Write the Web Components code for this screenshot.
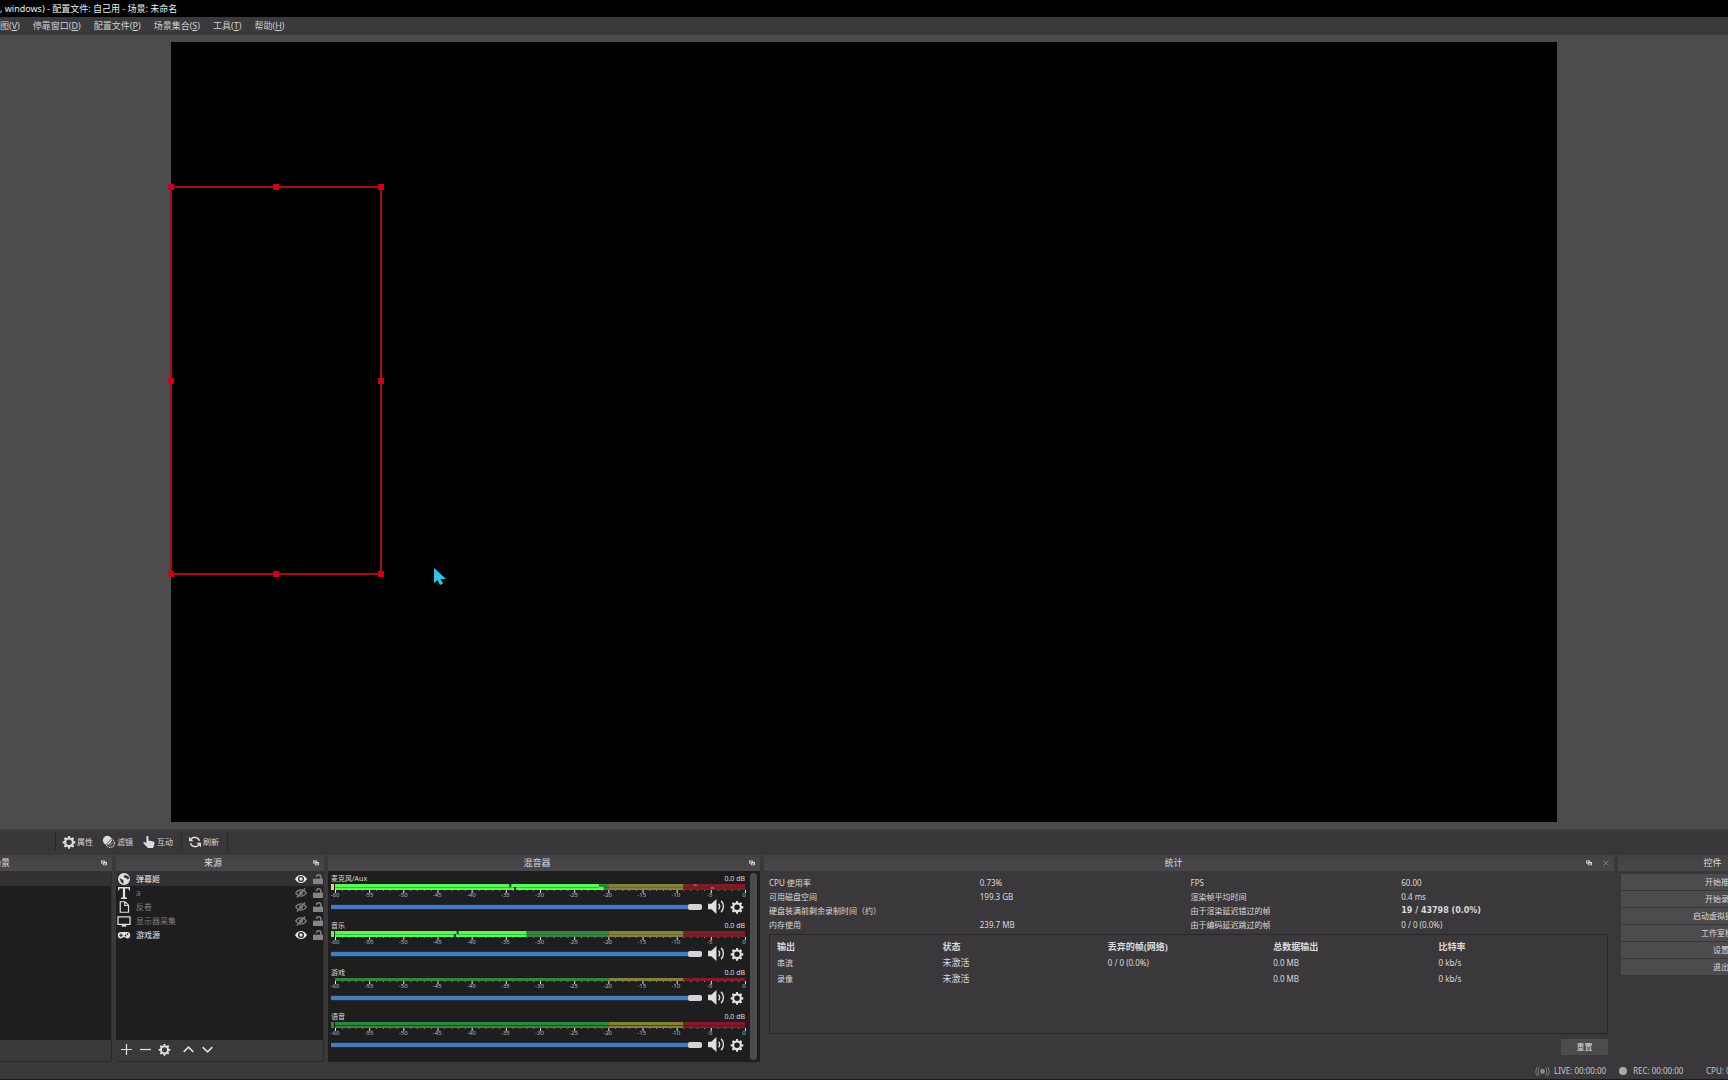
<!DOCTYPE html>
<html lang="zh-CN">
<head>
<meta charset="utf-8">
<title>OBS</title>
<style>
html,body{margin:0;height:100%;background:#3a383b}
body{overflow:hidden;font:8px/14px "Noto Sans","Noto Sans CJK SC",sans-serif;color:#dcdadc}
</style>
</head>
<body>
<obs-window></obs-window>
<script>
const define=(name,html,setup)=>customElements.define(name,class extends HTMLElement{
  connectedCallback(){
    if(this.shadowRoot)return;
    const root=this.attachShadow({mode:'open'});
    root.innerHTML='<style>*{box-sizing:border-box}button,input{font:inherit;color:inherit;margin:0}</style>'+(typeof html==='function'?html(this):html);
    if(setup)setup(this,root);
  }
});

const gear='<path fill-rule="evenodd" d="M6.8 0h2.4l.5 2.2 1.5.6 2-1.2 1.7 1.7-1.2 2 .6 1.5 2.2.5v2.4l-2.2.5-.6 1.5 1.2 2-1.7 1.7-2-1.2-1.5.6-.5 2.2H6.800l-.5-2.200-1.500-.6-2 1.200-1.700-1.700 1.200-2-.6-1.500L-.5 9.700V7.300l2.200-.5.6-1.500-1.200-2 1.700-1.700 2 1.200 1.500-.6zM8 4.600A3.600 3.600 0 1 0 8 12a3.600 3.600 0 0 0 0-7.400z"/>';
const icons={
  gear,
  filter:'<circle cx="5.800" cy="5.800" r="6"/><circle cx="9.500" cy="9.500" r="5.800" fill="none" stroke="currentColor" stroke-width="1.400" stroke-dasharray="1.800 1"/><path d="M4 11.500 11.500 4M6.500 13l7-7" stroke="#3a383b" stroke-width="1"/><path d="m8.500 13.500 5-5" stroke="currentColor" stroke-width="1"/>',
  hand:'<path d="M4.500 1.200C4.500-.2 7.300-.2 7.300 1.200V6l6.500 1.300c1.300.3 1.700 1 1.500 2.200l-.9 4.500-1.200 2H6.500L.5 9.800C0 8.300 1.600 7.600 2.700 8.400l1.800 1.400z"/>',
  refresh:'<g fill="none" stroke="currentColor" stroke-width="2"><path d="M2.500 4.500A6.500 6.500 0 0 1 14 6.500M13.500 11.500A6.500 6.500 0 0 1 2 9.500"/></g><path d="M0 1v6h6zM16 15V9h-6z"/>',
  globe:'<path fill-rule="evenodd" d="M8 0a8 8 0 1 0 0 16A8 8 0 0 0 8 0zm1.500 2.500 4.500 2 .8 3-2.300 1-1.500-1.800-2.500-.5L7.500 4zM2 7l4 1.500 1.500 2.200L7 14.500 4 12z"/>',
  text:'<path d="M0 0h16v4.500h-1.300L14 2H9.500v11.500l2.500.8V16H4v-1.700l2.500-.8V2H2l-.7 2.500H0z"/>',
  file:'<path d="M3 1h6.500L14 5.500V15H3zM9 1v5h5" fill="none" stroke="currentColor" stroke-width="1.600"/>',
  display:'<path d="M0 2.500h16v10H0z" fill="none" stroke="currentColor" stroke-width="1.700"/><path d="M5 12.500h6v3H5z"/>',
  pad:'<path fill-rule="evenodd" d="M4 4h8a4 4 0 0 1 0 8.500c-1.500 0-2.200-1.500-3-1.500H7c-.8 0-1.500 1.500-3 1.500A4 4 0 0 1 4 4zM3.300 6v1.500H1.800V9h1.500v1.500h1.500V9h1.500V7.500H4.800V6zM10 7.800a1 1 0 1 0 .1 0zM12.700 5.700a1 1 0 1 0 .1 0z"/>',
  eye:'<path fill-rule="evenodd" d="M0 8c4-7 12-7 16 0-4 7-12 7-16 0zm8-4a4 4 0 1 0 0 8 4 4 0 0 0 0-8z"/><circle cx="8" cy="8" r="2.200"/>',
  hidden:'<path d="M1 8c3.500-5.600 10.500-5.600 14 0-3.500 5.600-10.500 5.600-14 0z" fill="none" stroke="currentColor" stroke-width="1.800"/><circle cx="8" cy="8" r="2.500"/><path d="M2.500 14 13.500 2" stroke="currentColor" stroke-width="1.800"/>',
  lock:'<path d="M0 7.500h16V16H0z"/><path d="M5.500 4.500C6 .2 12.500.2 12.500 4.500V8" fill="none" stroke="currentColor" stroke-width="2.400"/>',
  plus:'<path d="M8 0v16M0 8h16" stroke="currentColor" stroke-width="1.800"/>',
  minus:'<path d="M0 8h16" stroke="currentColor" stroke-width="1.800"/>',
  up:'<path d="m1 11.500 7-7 7 7" fill="none" stroke="currentColor" stroke-width="2.200"/>',
  down:'<path d="m1 4.500 7 7 7-7" fill="none" stroke="currentColor" stroke-width="2.200"/>',
  speaker:'<path d="M0 5h3.500L9 0v16l-5.500-5H0z"/><path d="M11.300 5c1.500 1.500 1.500 4.500 0 6M14 2c3.200 3 3.200 9 0 12" fill="none" stroke="currentColor" stroke-width="1.500"/>',
  float:'<path fill-rule="evenodd" d="M0 1h11v4h5v9H5V9H0zm2 3v3h3V5h4V4zm5 5v3h7V9z"/>',
  close:'<path d="m1 1 14 14M15 1 1 15" stroke="currentColor" stroke-width="2"/>',
  live:'<circle cx="8" cy="8" r="3.500"/><path d="M3.500 2.500c-2.500 3-2.500 8 0 11M12.500 2.500c2.500 3 2.500 8 0 11M1 1c-3.500 4-3.500 10 0 14M15 1c3.500 4 3.500 10 0 14" fill="none" stroke="currentColor" stroke-width="1.300"/>',
  dot:'<circle cx="8" cy="8" r="8"/>'
};
define('obs-icon',el=>`<style>:host{display:block;flex:none;width:var(--s,12px);height:var(--s,12px)}svg{display:block;width:100%;height:100%;overflow:visible}</style><svg viewBox="0 0 16 16" fill="currentColor" aria-hidden="true">${icons[el.getAttribute('name')]}</svg>`);

define('obs-titlebar','<style>:host{display:block;height:17px;background:#000;color:#f0f0f0;font-size:9px;line-height:17px;white-space:pre}</style><slot></slot>');

define('obs-menubar',`<style>
:host{display:block;background:#3a393b;height:18px;font-size:9px}
nav{display:flex;gap:13px;line-height:18px;white-space:nowrap}
a{color:#d0ced0;text-decoration:none}
</style><nav><a href="#">图(<u>V</u>)</a><a href="#">停靠窗口(<u>D</u>)</a><a href="#">配置文件(<u>P</u>)</a><a href="#">场景集合(<u>S</u>)</a><a href="#">工具(<u>T</u>)</a><a href="#">帮助(<u>H</u>)</a></nav>`);

define('obs-preview',`<style>
:host{display:flex;justify-content:center;flex:1;min-height:0;padding:7px 0;background:#4d4b4e}
.canvas{position:relative;height:100%;aspect-ratio:16/9;background:#000}
.sel{position:absolute;left:0;top:18.600%;width:15.200%;height:49.600%;box-shadow:0 0 0 1px #a80c1c,inset 0 0 0 1px #a80c1c}
.sel i{position:absolute;width:6px;height:6px;margin:-3px;background:#cc0019}
svg{position:absolute;left:19%;top:67.400%;width:12px;height:18px}
</style><div class="canvas"><div class="sel"></div>
<svg viewBox="0 0 12 18"><path fill="#33c3ea" d="M0 0v15l3.500-3 2.500 5 3-1.500L6.500 11H12z"/></svg></div>`,(el,root)=>{
  const box=root.querySelector('.sel');
  for(const x of [0,50,100])for(const y of [0,50,100]){
    if(x===50&&y===50)continue;
    const h=document.createElement('i');
    h.style.left=x+'%';h.style.top=y+'%';
    box.append(h);
  }
});

define('obs-source-toolbar',`<style>
:host{display:flex;align-items:center;height:26px;padding:0 0 1px 55px;background:linear-gradient(#3f3d40,#39373a 5px)}
.sep{width:1px;height:17px;background:#29272a}
.group{display:flex;gap:10px;padding:0 8px 0 7px}
button{display:flex;gap:2px;align-items:center;border:0;background:none;padding:0;line-height:14px}
</style><span class="sep"></span>
<div class="group"><button><obs-icon name="gear"></obs-icon>属性</button><button><obs-icon name="filter"></obs-icon>滤镜</button><button><obs-icon name="hand"></obs-icon>互动</button></div>
<span class="sep"></span><div class="group"><button><obs-icon name="refresh"></obs-icon>刷新</button></div><span class="sep"></span>`);

define('obs-dock',el=>`<style>
:host{display:flex;flex-direction:column;min-width:0}
header{display:flex;align-items:center;height:16px;padding-right:5px;gap:3px;background:linear-gradient(#434144,#49474a);font-size:9px;line-height:16px;--s:6px}
h2{flex:1;margin:0;font:inherit;text-align:center}
header button{border:0;padding:0;background:none}
.close{margin-left:8px;color:#8a888b}
.body{flex:1;min-height:0;display:flex;flex-direction:column}
</style><header><h2>${el.getAttribute('heading')}</h2><button aria-label="浮动"><obs-icon name="float"></obs-icon></button>${el.hasAttribute('closable')?'<button class="close" aria-label="关闭"><obs-icon name="close"></obs-icon></button>':''}</header><div class="body"><slot></slot></div>`);

define('obs-list',`<style>
:host{display:flex;flex-direction:column;flex:1;background:#1f1e1f;border:solid #2b2a2c;border-width:0 1px 1px 0}
.items{flex:1}
.bar{display:flex;align-items:center;height:21px;padding:0 5px 2px;background:#3a383b}
</style><div class="items"><slot></slot></div><div class="bar"><slot name="bar"></slot></div>`);

define('obs-source',el=>{
  const off=el.hasAttribute('off');
  return `<style>
:host{display:flex;align-items:center;height:14px;padding-left:2px;color:${off?'#807e81':'#e8e6e8'}}
:host([selected]){height:15px;background:#333134}
.name{flex:1;padding-left:6px}
.type{color:#e0dee0}
.toggle{display:block;border:0;background:none;padding:0}
.lock{--s:10px;color:#858386;margin-left:6px}
</style><obs-icon class="type" name="${el.getAttribute('type')}"></obs-icon><span class="name"><slot></slot></span><button class="toggle" aria-label="可见"><obs-icon name="${off?'hidden':'eye'}"></obs-icon></button><button class="toggle lock" aria-label="锁定"><obs-icon name="lock"></obs-icon></button>`;
});

define('obs-source-actions',`<style>
:host{display:flex;gap:8px;align-items:center;--s:11px}
button{border:0;background:none;padding:0;color:#e0dee0}
.up{margin-left:5px}
</style><button aria-label="添加"><obs-icon name="plus"></obs-icon></button><button aria-label="移除"><obs-icon name="minus"></obs-icon></button><button aria-label="属性"><obs-icon name="gear"></obs-icon></button><button class="up" aria-label="上移"><obs-icon name="up"></obs-icon></button><button aria-label="下移"><obs-icon name="down"></obs-icon></button>`);

define('obs-channel',el=>{
  const mono=el.hasAttribute('mono'),h=mono?3:6;
  const nums=a=>(el.getAttribute(a)||'').split(',').filter(Boolean).map(Number);
  const levels=nums('levels'),peaks=nums('peaks'),hot=nums('hot');
  const pc=db=>((db+60)/60*100)+'%';
  let s=`<rect width="66.667%" height="${h}" fill="#33853a"/><rect x="66.667%" width="18.333%" height="${h}" fill="#85803a"/><rect x="85%" width="15%" height="${h}" fill="#7f1c28"/>`;
  if(!mono)s+=`<rect y="3" width="100%" height="1" fill="#1c2c1c" opacity="${levels.length?'.25':'.7'}"/>`;
  levels.forEach((v,i)=>s+=`<rect y="${i*3}" width="${pc(v)}" height="3" fill="#58fa55"/>`);
  if(levels.length)s+=`<rect y="3" width="${pc(levels[0])}" height="1" fill="#2fbf3c"/>`;
  peaks.forEach((v,i)=>s+=`<rect x="${pc(v)}" y="${i*3}" width="2" height="3" fill="#0c3a10"/>`);
  hot.forEach((v,i)=>s+=`<rect x="${pc(v)}" y="${i*3}" width="3" height="2" fill="#d8404c"/>`);
  for(let d=0;d<=60;d++)s+=`<rect x="${d/60*100}%" y="${h}" width="1" height="${d%5?1:3}" fill="${d%5?'#8a888a':'#e8e6e8'}"/>`;
  let n='';for(let d=-60;d<=0;d+=5)n+=`<span>${d}</span>`;
  return `<style>
:host{display:block;margin-bottom:5px}
.head{display:flex;justify-content:space-between;line-height:11px;font-size:7px}
.meter{display:flex;gap:1px}
.clip{width:3px;height:${h}px;background:${el.hasAttribute('clip')?'#e8d84a':levels.length?'#58fa55':mono?'none':'#33853a'}}
svg{display:block;flex:1;min-width:0;height:${h+2}px;overflow:visible}
.nums{display:flex;justify-content:space-between;margin:0 1px 0 4px;font-size:6px;line-height:6px;height:6px;color:#b8b6b8}
.nums span{width:0;display:flex;justify-content:center}
.ctl{display:flex;align-items:center;height:17px;padding-right:2px;color:#e0dee0}
.ctl button{border:0;background:none;padding:0}
.mute{--s:15px;margin:0 8px 0 6px}
input{flex:1;min-width:0;height:6px;appearance:none;background:linear-gradient(#16304c 1px,#447cbc 1px 5px,#16304c 5px)}
input::-webkit-slider-thumb{appearance:none;width:14px;height:6px;border-radius:2px;background:#d4d2d4}
</style><div class="head"><label for="v"><slot></slot></label><span>0.0 dB</span></div>
<div class="meter"><span class="clip"></span><svg>${s}</svg></div><div class="nums">${n}</div>
<div class="ctl"><input id="v" type="range" min="0" max="100" value="100"><button class="mute" aria-label="静音"><obs-icon name="speaker"></obs-icon></button><button aria-label="设置"><obs-icon name="gear"></obs-icon></button></div>`;
});

define('obs-mixer',`<style>
:host{display:flex;flex:1;min-height:0;gap:5px;padding:2px 3px;background:#1f1e1f;overflow:hidden}
.rows{flex:1;min-width:0}
.scroll{width:7px;border-radius:4px;background:#4d4b4e}
</style><div class="rows"><slot></slot></div><div class="scroll"></div>`);

define('obs-stats',`<style>
:host{display:flex;flex-direction:column;flex:1;padding:5px 6px 7px 5px}
dl{display:grid;grid-template-columns:repeat(4,1fr);grid-auto-rows:14px;margin:0 -4px 2px 0}
dd{margin:0}
.warn{font-family:"DejaVu Sans";font-weight:700}
.frame{height:100px;border:1px solid #29272a;padding:4px 3px 0 7px}
table{width:100%;table-layout:fixed;border-collapse:collapse}
th,td{padding:0;height:16px;text-align:left;white-space:nowrap}
th{font-size:9px;font-weight:700}
td.state{font-size:9px}
button{align-self:flex-end;width:47px;height:16px;margin-top:5px;border:0;background:#4d4b4e;padding:0}
</style>
<dl><dt>CPU 使用率</dt><dd>0.73%</dd><dt>FPS</dt><dd>60.00</dd>
<dt>可用磁盘空间</dt><dd>199.3 GB</dd><dt>渲染帧平均时间</dt><dd>0.4 ms</dd>
<dt>硬盘装满前剩余录制时间（约）</dt><dd></dd><dt>由于渲染延迟错过的帧</dt><dd class="warn">19 / 43798 (0.0%)</dd>
<dt>内存使用</dt><dd>239.7 MB</dd><dt>由于编码延迟跳过的帧</dt><dd>0 / 0 (0.0%)</dd></dl>
<div class="frame"><table><thead><tr><th>输出</th><th>状态</th><th>丢弃的帧(网络)</th><th>总数据输出</th><th>比特率</th></tr></thead>
<tbody><tr><td>串流</td><td class="state">未激活</td><td>0 / 0 (0.0%)</td><td>0.0 MB</td><td>0 kb/s</td></tr>
<tr><td>录像</td><td class="state">未激活</td><td></td><td>0.0 MB</td><td>0 kb/s</td></tr></tbody></table></div>
<button>重置</button>`);

define('obs-controls',`<style>
:host{display:flex;flex-direction:column;gap:1px;padding:3px 0 0 3px}
button{height:16px;border:0;padding:0;background:#4d4b4e;line-height:16px}
</style><button>开始推流</button><button>开始录制</button><button>启动虚拟摄像机</button><button>工作室模式</button><button>设置</button><button>退出</button>`);

define('obs-status',`<style>
:host{display:flex;align-items:center;justify-content:flex-end;height:17px;margin-right:-50px;border-bottom:1px solid #1a191b;white-space:nowrap;color:#c8c6c8}
span{display:flex;align-items:center;gap:6px}
.live{--s:11px;width:82px}.rec{--s:8px;width:87px}.cpu{width:72px}
obs-icon{color:#8c8a8d}.rec obs-icon{color:#aaa8ab}
</style><span class="live"><obs-icon name="live"></obs-icon>LIVE: 00:00:00</span><span class="rec"><obs-icon name="dot"></obs-icon>REC: 00:00:00</span><span class="cpu">CPU: 0.7%, 60.00 fps</span>`);

define('obs-window',`<style>
:host{display:flex;flex-direction:column;height:100vh}
.docks{display:grid;grid-template-columns:208px 208px 432px 1fr 203px;gap:4px;height:206px;margin:0 -93px 2px -96px}
.blank{height:15px;background:#333134}
</style>
<obs-titlebar>, windows) - 配置文件: 自己用 - 场景: 未命名</obs-titlebar>
<obs-menubar></obs-menubar>
<obs-preview></obs-preview>
<obs-source-toolbar></obs-source-toolbar>
<div class="docks">
<obs-dock heading="场景"><obs-list><div class="blank"></div></obs-list></obs-dock>
<obs-dock heading="来源"><obs-list>
<obs-source type="globe" selected>弹幕姬</obs-source>
<obs-source type="text" off>a</obs-source>
<obs-source type="file" off>反卷</obs-source>
<obs-source type="display" off>显示器采集</obs-source>
<obs-source type="pad">游戏源</obs-source>
<obs-source-actions slot="bar"></obs-source-actions></obs-list></obs-dock>
<obs-dock heading="混音器"><obs-mixer>
<obs-channel clip levels="-21.400,-20.700" peaks="-34.500,-33.800" hot="-7.500,-5">麦克风/Aux</obs-channel>
<obs-channel levels="-32,-32" peaks="-42.200,-42.600">音乐</obs-channel>
<obs-channel mono>游戏</obs-channel>
<obs-channel>语音</obs-channel>
</obs-mixer></obs-dock>
<obs-dock heading="统计" closable><obs-stats></obs-stats></obs-dock>
<obs-dock heading="控件"><obs-controls></obs-controls></obs-dock>
</div>
<obs-status></obs-status>`);
</script>
</body>
</html>
